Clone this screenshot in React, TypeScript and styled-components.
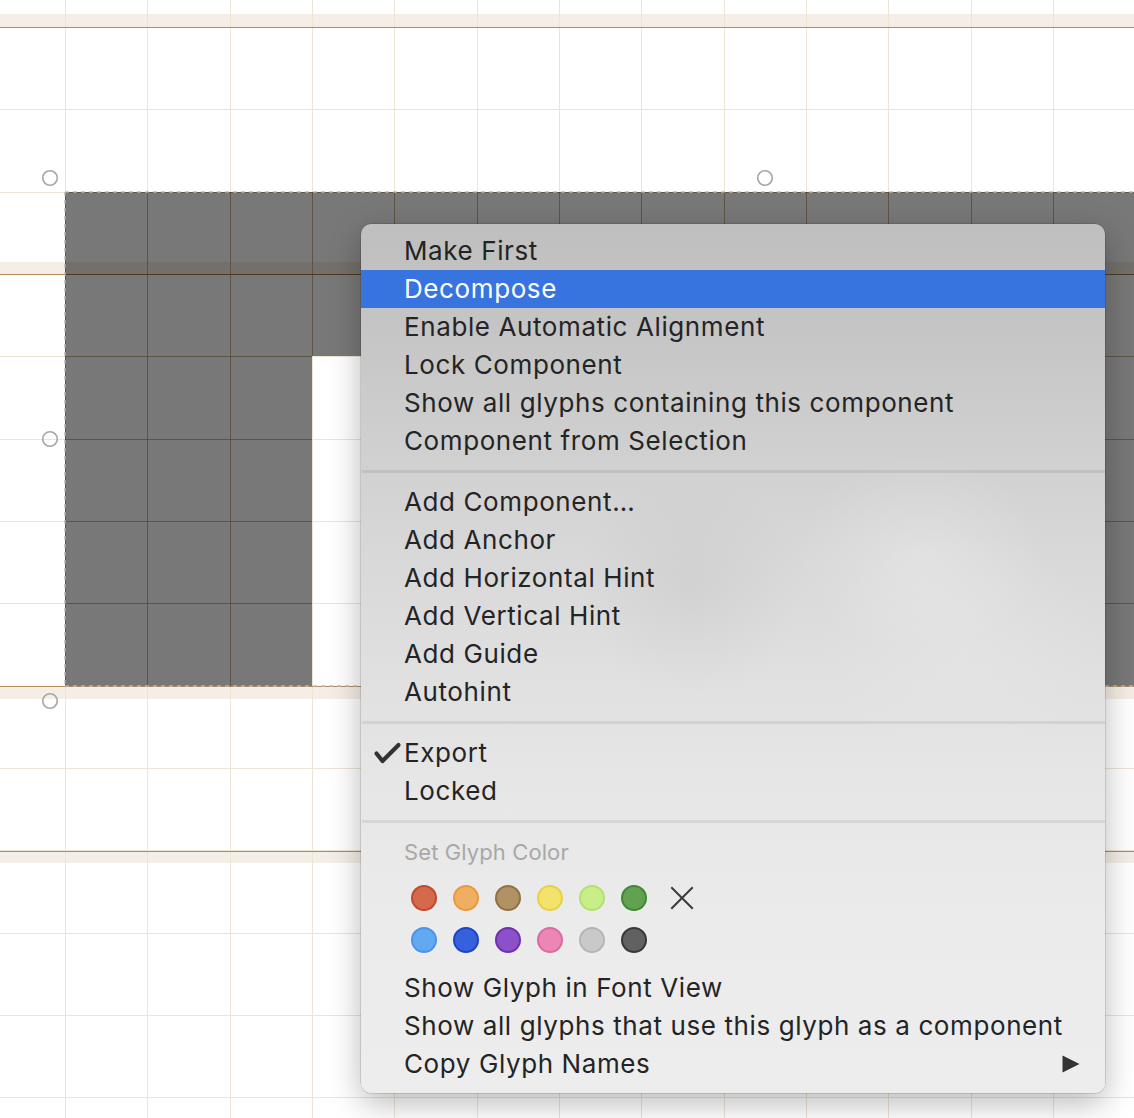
import React from "react";
import styled, { createGlobalStyle } from "styled-components";

const GlobalStyle = createGlobalStyle`
  html, body { margin: 0; padding: 0; background: #ffffff; }
  body { font-family: Inter, "Noto Sans", sans-serif; }
`;

const Stage = styled.div`
  position: relative;
  width: 1134px;
  height: 1118px;
  overflow: hidden;
  background: #ffffff;
`;

const CanvasSvg = styled.svg`
  display: block;
  width: 1134px;
  height: 1118px;
`;

const Menu = styled.div`
  position: absolute;
  left: 361px;
  top: 224px;
  width: 744px;
  box-sizing: border-box;
  padding: 8px 0 10px;
  border-radius: 10px;
  background:
    radial-gradient(ellipse 180px 140px at 560px 330px, rgba(255, 255, 255, 0.22), rgba(255, 255, 255, 0) 70%),
    radial-gradient(ellipse 200px 160px at 600px 420px, rgba(235, 235, 235, 0.35), rgba(235, 235, 235, 0) 70%),
    radial-gradient(ellipse 160px 160px at 330px 360px, rgba(185, 185, 185, 0.25), rgba(185, 185, 185, 0) 70%),
    linear-gradient(180deg, #bfbfbf 0%, #c5c5c5 12%, #cfcfcf 25%, #d8d8d8 38%, #e0e0e0 52%, #e7e7e7 66%, #ebebeb 80%, #ededed 100%);
  box-shadow: 0 10px 32px rgba(0, 0, 0, 0.28), 0 0 0 0.5px rgba(0, 0, 0, 0.22);
  font-family: Inter, "Noto Sans", sans-serif;
  color: #222222;
`;

const Item = styled.div<{ $active?: boolean; $muted?: boolean }>`
  display: grid;
  grid-template-columns: 43px 1fr auto;
  align-items: center;
  height: 38px;
  font-size: ${(p) => (p.$muted ? "22px" : "26px")};
  letter-spacing: ${(p) => (p.$muted ? "0.1px" : "0.6px")};
  line-height: 38px;
  white-space: nowrap;
  color: ${(p) => (p.$active ? "#ffffff" : p.$muted ? "#a8a8a8" : "#242424")};
  background: ${(p) => (p.$active ? "#3874df" : "transparent")};
`;

const Gutter = styled.span`
  display: flex;
  align-items: center;
  padding-left: 12px;
  height: 38px;
`;

const Label = styled.span``;

const Trailing = styled.span`
  display: flex;
  align-items: center;
  padding-right: 25px;
`;

const Separator = styled.div`
  height: 3px;
  margin: 10px 0 10px 1px;
  background: rgba(0, 0, 0, 0.075);
`;

const ColorGrid = styled.div`
  display: grid;
  grid-template-columns: repeat(7, 42px);
  grid-auto-rows: 42px;
  padding-left: 42px;
  margin: 6px 0 8px;
`;

const Cell = styled.div<{ $shift?: number }>`
  display: flex;
  align-items: center;
  justify-content: center;
  transform: translateX(${(p) => p.$shift ?? 0}px);
`;

const Swatch = styled.span<{ $fill: string; $ring: string }>`
  display: block;
  width: 26px;
  height: 26px;
  box-sizing: border-box;
  border-radius: 50%;
  background: ${(p) => p.$fill};
  border: 2.5px solid ${(p) => p.$ring};
`;

const GRID_X = Array.from({ length: 14 }, (_, k) => Math.round(65 + 82.333 * k));
const GRID_Y = Array.from({ length: 14 }, (_, k) => Math.round(27 + 82.333 * k));

const GLYPH_PATH = "M65 192 H1134 V686 H1000 V356 H312 V686 H65 Z";

const METRICS = [
  { line: 27, bandTop: 14, bandBottom: 27 },
  { line: 274, bandTop: 262, bandBottom: 274 },
  { line: 686, bandTop: 686, bandBottom: 699 },
  { line: 851, bandTop: 851, bandBottom: 863 },
];

const NODES = [
  [50, 178],
  [765, 178],
  [50, 439],
  [50, 701],
];

function GlyphCanvas() {
  const lines = (stroke: string) => (
    <g stroke={stroke} strokeWidth={1} shapeRendering="crispEdges">
      {GRID_X.map((x) => (
        <line key={`v${x}`} x1={x + 0.5} y1={0} x2={x + 0.5} y2={1118} />
      ))}
      {GRID_Y.map((y) => (
        <line key={`h${y}`} x1={0} y1={y + 0.5} x2={1134} y2={y + 0.5} />
      ))}
    </g>
  );
  return (
    <CanvasSvg viewBox="0 0 1134 1118" xmlns="http://www.w3.org/2000/svg">
      <defs>
        <clipPath id="glyphClip">
          <path d={GLYPH_PATH} />
        </clipPath>
      </defs>
      <rect x={0} y={0} width={1134} height={1118} fill="#ffffff" />
      {METRICS.map((m) => (
        <rect key={`b${m.line}`} x={0} y={m.bandTop} width={1134} height={m.bandBottom - m.bandTop} fill="#f5eee6" />
      ))}
      {lines("#ece4d5")}
      {METRICS.map((m) => (
        <line
          key={`m${m.line}`}
          x1={0}
          y1={m.line + 0.5}
          x2={1134}
          y2={m.line + 0.5}
          stroke="#b38b57"
          strokeWidth={1}
          shapeRendering="crispEdges"
        />
      ))}
      <path d={GLYPH_PATH} fill="rgba(0,0,0,0.53)" />
      <g clipPath="url(#glyphClip)">{lines("rgba(60,45,15,0.36)")}</g>
      <g fill="none" stroke="rgba(185,185,185,0.9)" strokeWidth={1.5} strokeDasharray="4 4">
        <line x1={65} y1={192} x2={1134} y2={192} />
        <line x1={65} y1={192} x2={65} y2={686} />
        <line x1={65} y1={686} x2={1134} y2={686} />
      </g>
      {NODES.map(([cx, cy]) => (
        <circle key={`${cx}-${cy}`} cx={cx} cy={cy} r={7.3} fill="none" stroke="#a6a6a6" strokeWidth={1.6} />
      ))}
    </CanvasSvg>
  );
}

const CheckIcon = () => (
  <svg width="30" height="22" viewBox="0 0 30 22" aria-hidden="true">
    <path
      d="M3.5 11.5 L9.5 19 L25.5 3"
      fill="none"
      stroke="#333333"
      strokeWidth={4.2}
      strokeLinecap="round"
      strokeLinejoin="round"
    />
  </svg>
);

const ClearIcon = () => (
  <svg width="24" height="24" viewBox="0 0 24 24" aria-hidden="true">
    <path d="M2 2 L22 22 M22 2 L2 22" stroke="#3a3a3a" strokeWidth={2} strokeLinecap="square" />
  </svg>
);

const SubmenuArrow = () => (
  <svg width="18" height="18" viewBox="0 0 18 18" aria-hidden="true">
    <path d="M0.5 0.5 L17.5 9 L0.5 17.5 Z" fill="#333333" />
  </svg>
);

type Entry =
  | { kind: "item"; label: string; active?: boolean; checked?: boolean; submenu?: boolean; muted?: boolean }
  | { kind: "sep" }
  | { kind: "colors" };

const ENTRIES: Entry[] = [
  { kind: "item", label: "Make First" },
  { kind: "item", label: "Decompose", active: true },
  { kind: "item", label: "Enable Automatic Alignment" },
  { kind: "item", label: "Lock Component" },
  { kind: "item", label: "Show all glyphs containing this component" },
  { kind: "item", label: "Component from Selection" },
  { kind: "sep" },
  { kind: "item", label: "Add Component…" },
  { kind: "item", label: "Add Anchor" },
  { kind: "item", label: "Add Horizontal Hint" },
  { kind: "item", label: "Add Vertical Hint" },
  { kind: "item", label: "Add Guide" },
  { kind: "item", label: "Autohint" },
  { kind: "sep" },
  { kind: "item", label: "Export", checked: true },
  { kind: "item", label: "Locked" },
  { kind: "sep" },
  { kind: "item", label: "Set Glyph Color", muted: true },
  { kind: "colors" },
  { kind: "item", label: "Show Glyph in Font View" },
  { kind: "item", label: "Show all glyphs that use this glyph as a component" },
  { kind: "item", label: "Copy Glyph Names", submenu: true },
];

const COLORS: [string, string][] = [
  ["#d4694e", "#c24a2b"],
  ["#f0ae62", "#e89a3d"],
  ["#b09264", "#93703f"],
  ["#f3e26b", "#e9d045"],
  ["#c8ee8a", "#b3e06f"],
  ["#63a152", "#3e8a2f"],
  ["#63a9f1", "#4a94e8"],
  ["#3761dc", "#1b45c9"],
  ["#8a51c8", "#6e2fb0"],
  ["#eb86b5", "#db6aa1"],
  ["#c9c9c9", "#b6b6b6"],
  ["#616161", "#383838"],
];

function ColorPicker() {
  const first = COLORS.slice(0, 6);
  const second = COLORS.slice(6);
  return (
    <ColorGrid>
      {first.map(([f, r]) => (
        <Cell key={f}>
          <Swatch $fill={f} $ring={r} />
        </Cell>
      ))}
      <Cell $shift={6}>
        <ClearIcon />
      </Cell>
      {second.map(([f, r]) => (
        <Cell key={f}>
          <Swatch $fill={f} $ring={r} />
        </Cell>
      ))}
    </ColorGrid>
  );
}

function ContextMenu() {
  return (
    <Menu>
      {ENTRIES.map((e, i) => {
        if (e.kind === "sep") return <Separator key={i} />;
        if (e.kind === "colors") return <ColorPicker key={i} />;
        return (
          <Item key={i} $active={e.active} $muted={e.muted}>
            <Gutter>{e.checked ? <CheckIcon /> : null}</Gutter>
            <Label>{e.label}</Label>
            <Trailing>{e.submenu ? <SubmenuArrow /> : null}</Trailing>
          </Item>
        );
      })}
    </Menu>
  );
}

export default function App() {
  return (
    <>
      <GlobalStyle />
      <Stage>
        <GlyphCanvas />
        <ContextMenu />
      </Stage>
    </>
  );
}
